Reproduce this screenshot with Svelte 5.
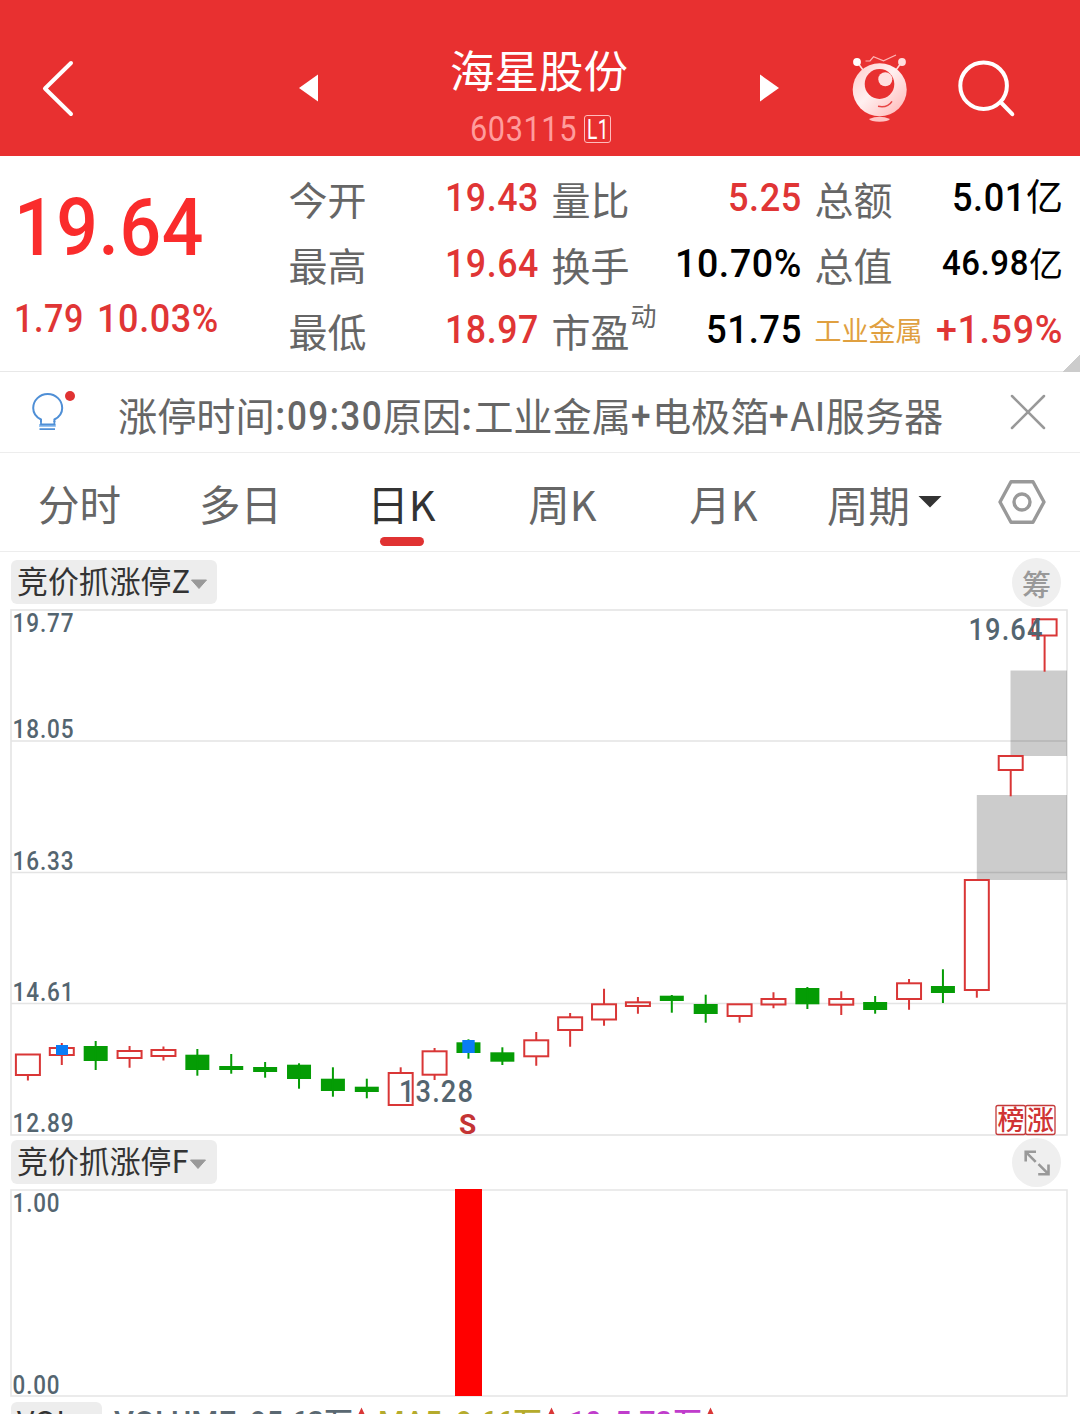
<script>
  const openRows = [
    { label: '今开', value: '19.43' },
    { label: '最高', value: '19.64' },
    { label: '最低', value: '18.97' }
  ];
  const ratioRows = [
    { label: '量比', value: '5.25', w: 74, tone: 'up' },
    { label: '换手', value: '10.70%', w: 127, tone: 'ink' },
    { label: '市盈', sup: '动', value: '51.75', w: 96, tone: 'ink' }
  ];
  const tabs = ['分时', '多日', '日K', '周K', '月K'];
  const notice = [
    ['cjk', '涨停时间', 157], ['num', ':', 12], ['num', '09:30', 96], ['cjk', '原因', 78],
    ['num', ':', 13], ['cjk', '工业金属', 157], ['num', '+', 21], ['cjk', '电极箔', 118],
    ['num', '+', 21], ['cjk', 'AI服务器', 153]
  ];
  // Candles: body top, body bottom, wick top, wick bottom (chart y), rising flag
  const candles = [
    [1053.5, 1076, 1055, 1080.5, 1], [1047, 1056, 1043, 1065, 1], [1046, 1061, 1041, 1070, 0],
    [1050, 1059, 1046, 1067.7, 1], [1049, 1057, 1046.5, 1060.5, 1], [1054.7, 1070, 1049, 1075.7, 0],
    [1066, 1070, 1054, 1073.7, 0], [1067, 1072, 1062, 1077.7, 0], [1064.7, 1079, 1063.3, 1088.7, 0],
    [1078.7, 1091, 1067.3, 1096.7, 0], [1086.7, 1092, 1078.7, 1098.3, 0], [1072, 1106, 1067.3, 1105, 1],
    [1050.3, 1075.7, 1048, 1080, 1], [1042.3, 1053, 1039.3, 1058.7, 0], [1052.3, 1061.7, 1047.3, 1065, 0],
    [1039.3, 1057.3, 1032, 1065.7, 1], [1016.3, 1031, 1013, 1046.7, 1], [1003.3, 1020.5, 988.7, 1025.7, 1],
    [1001.3, 1007, 997, 1013.7, 1], [995.7, 1001, 995, 1012.7, 0], [1004, 1014, 994.7, 1022.7, 0],
    [1003.3, 1017, 1004.3, 1022.7, 1], [998, 1005.5, 992.3, 1008.3, 1], [988, 1004.3, 987, 1009, 0],
    [998, 1005.7, 991.3, 1015, 1], [1002, 1010, 996, 1013.7, 0], [982.3, 1000, 979, 1009.7, 1],
    [986, 993, 969.3, 1003, 0], [879, 991, 880, 997.7, 1], [755, 771, 756, 796.3, 1],
    [618.3, 636.5, 619.3, 671.7, 1]
  ];
  const cx = (i) => 27.9 + 33.89 * i;
  const levels = [['19.77', 632.2], ['18.05', 738], ['16.33', 870], ['14.61', 1001], ['12.89', 1132]];
  // Volume legend: text, x, width, colour
  const legend = [
    ['VOLUME:', 114, 130, '#5a6872'], ['95.63', 250, 74, '#5a6872'], ['万', 324, 29, '#5a6872'],
    ['MA5:', 378, 72, '#b5ab2c'], ['9.66', 456, 57, '#b5ab2c'], ['万', 513, 29, '#b5ab2c'],
    ['10:', 569, 40, '#c03ccc'], ['5.73', 615, 57, '#c03ccc'], ['万', 673, 29, '#c03ccc']
  ];
</script>

{#snippet num(text, w, size, cls)}
  <svg class="num {cls}" width={w} height={size} aria-label={text}>
    <text x="0" y={size * 0.855} font-size={size} textLength={w} lengthAdjust="spacingAndGlyphs">{text}</text>
  </svg>
{/snippet}

{#snippet chip(name)}
  <button class="chip">
    <span>{name}</span>
    <svg width="18" height="11" viewBox="0 0 18 11"><path d="M1.500 1h15L9 9.500z" fill="#999" stroke="#999" stroke-linejoin="round" /></svg>
  </button>
{/snippet}

<main>
  <header>
    <svg class="back" width="34" height="60" viewBox="0 0 34 60"><path d="M30 5 4 30.500 30 56" /></svg>
    <svg class="prev" width="20" height="28" viewBox="0 0 20 28"><path d="M0 14 19 .5v27z" fill="#fff" /></svg>
    <div class="name">
      <h1>海星股份</h1>
      <div class="code">
        {@render num('603115', 107, 35, 'pale')}
        <span class="level">{@render num('L1', 22, 27, 'thin')}</span>
      </div>
    </div>
    <svg class="next" width="20" height="28" viewBox="0 0 20 28"><path d="M20 14 1 .5v27z" fill="#fff" /></svg>
    <svg class="mascot" width="56" height="70" viewBox="852 53 56 70">
      <defs>
        <linearGradient id="skin" x1="0" y1="0" x2="1" y2="1">
          <stop offset="0" stop-color="#ffc9c9" /><stop offset=".45" stop-color="#fff0f0" /><stop offset="1" stop-color="#ffb3b3" />
        </linearGradient>
      </defs>
      <path d="m858 63 5 7M901 63l-5 7" stroke="#ffd9d9" stroke-width="1.500" />
      <circle cx="857" cy="62" r="3.900" fill="#fff" /><circle cx="902" cy="62" r="3.900" fill="#ffdede" />
      <path d="M865.500 61h4.500l3.500-4.200 10 4L896 55" fill="none" stroke="#ffb5b5" stroke-width="1.200" />
      <ellipse cx="879.700" cy="89.700" rx="27" ry="26.500" fill="url(#skin)" />
      <ellipse cx="879.500" cy="84" rx="14.800" ry="15" fill="#e83030" />
      <circle cx="885.300" cy="79.300" r="7" fill="#ffe0e0" />
      <path d="M878 106.300q9.500 2 14-5" fill="none" stroke="#e84545" stroke-width="1.500" />
      <path d="M869 119q10.500-4.500 21 0-2 2.800-10.500 2.800T869 119z" fill="#ffc4c4" />
    </svg>
    <svg class="search" width="60" height="60" viewBox="956 58 60 60">
      <circle cx="983.600" cy="85.700" r="23.300" /><path d="m1001 102.500 11.300 11.700" />
    </svg>
  </header>

  <section class="quote">
    <div class="price">
      <div class="last">{@render num('19.64', 190, 80, 'hot')}</div>
      <div class="change">
        {@render num('1.79', 70, 38, 'up')}
        {@render num('10.03%', 122, 38, 'up')}
      </div>
    </div>
    <dl class="c1">
      {#each openRows as r}
        <div><dt>{r.label}</dt><dd>{@render num(r.value, 94, 39.5, 'up')}</dd></div>
      {/each}
    </dl>
    <dl class="c2">
      {#each ratioRows as r}
        <div><dt>{r.label}{#if r.sup}<small>{r.sup}</small>{/if}</dt><dd>{@render num(r.value, r.w, 39.5, r.tone)}</dd></div>
      {/each}
    </dl>
    <dl class="c3">
      <div><dt>总额</dt><dd>{@render num('5.01', 74, 39.5, 'ink')}<b>亿</b></dd></div>
      <div><dt>总值</dt><dd>{@render num('46.98', 87, 35.5, 'ink')}<b class="sm">亿</b></dd></div>
      <div><dt class="sector">工业金属</dt><dd>{@render num('+1.59%', 127, 39.5, 'up')}</dd></div>
    </dl>
    <i class="corner"></i>
  </section>

  <section class="notice">
    <svg class="bulb" width="48" height="44" viewBox="30 388 48 44">
      <path d="M41 422v-2.500c-5-2.500-7.800-6.600-7.800-11.500a14.500 14 0 0 1 29 0c0 4.900-2.800 9-7.800 11.500v2.500" fill="none" stroke="#4f8fd6" stroke-width="2" />
      <path d="M39 425.500h16.800" stroke="#9cc6f2" stroke-width="3" />
      <path d="M41 421v3.500h13.400V421M39.500 429.200h15.500" fill="none" stroke="#4f8fd6" stroke-width="1.800" />
      <circle cx="70" cy="396" r="5" fill="#e03232" />
    </svg>
    <p>
      {#each notice as [kind, text, w]}
        {#if kind === 'cjk'}<span>{text}</span>{:else}{@render num(text, w, 40, 'gray')}{/if}
      {/each}
    </p>
    <svg class="close" width="36" height="36" viewBox="0 0 36 36"><path d="M2 2l32 32M34 2 2 34" /></svg>
  </section>

  <nav>
    {#each tabs as t}
      <button class:active={t === '日K'}>{t}</button>
    {/each}
    <button class="period">周期<svg width="24" height="12" viewBox="0 0 24 12"><path d="M.5 0h23L12 11.500z" fill="#333" /></svg></button>
    <svg class="gear" width="48" height="44" viewBox="0 0 48 44">
      <path d="M13 1.800h22L46 22 35 42.200H13L2 22z" /><circle cx="24" cy="22" r="8" />
    </svg>
  </nav>

  <div class="bar first">{@render chip('竞价抓涨停Z')}<span class="round">筹</span></div>

  <svg class="chart" width="1080" height="529" viewBox="0 608 1080 529">
    <g stroke="#e4e4e4" stroke-width="1.300">
      <path d="M11 741h1056M11 872.500h1056M11 1003.500h1056" />
      <rect x="11" y="610" width="1056" height="525" fill="none" stroke-width="1.600" />
    </g>
    <g fill="#000" fill-opacity=".2">
      <rect x="1010.500" y="670.500" width="56.500" height="85.500" />
      <rect x="976.800" y="795" width="90.200" height="85" />
    </g>
    {#each candles as [top, bottom, high, low, rise], i}
      {#if rise}
        <g class="rise">
          <path d="M{cx(i)} {high}V{top + 1}M{cx(i)} {bottom - 1}V{low}" />
          <rect x={cx(i) - 12} y={top + 1} width="24" height={bottom - top - 2} />
        </g>
      {:else}
        <g class="fall">
          <rect x={cx(i) - 12} y={top} width="24" height={bottom - top} />
          <rect x={cx(i) - 1} y={high} width="2" height={low - high} />
        </g>
      {/if}
    {/each}
    <rect x="56" y="1045" width="12" height="10" fill="#0a7cf5" />
    <rect x="462.300" y="1040" width="12.400" height="13" fill="#0a7cf5" />
    <g class="axis" font-size="25">
      {#each levels as [label, y]}
        <text x="12.500" {y} textLength="62" lengthAdjust="spacingAndGlyphs">{label}</text>
      {/each}
    </g>
    <g class="axis" font-size="31">
      <text x="399" y="1102" textLength="75" lengthAdjust="spacingAndGlyphs">13.28</text>
      <text x="968.500" y="640" textLength="75" lengthAdjust="spacingAndGlyphs">19.64</text>
    </g>
    <text class="sell" x="467.500" y="1134">S</text>
    <g class="marks">
      <rect x="996" y="1105.500" width="29.500" height="29" rx="2" /><rect x="1025.500" y="1105.500" width="29.500" height="29" rx="2" />
      <text x="1011" y="1129.500">榜</text><text x="1040.500" y="1129.500">涨</text>
    </g>
  </svg>

  <div class="bar second">
    {@render chip('竞价抓涨停F')}
    <span class="round">
      <svg width="28" height="28" viewBox="1022.500 1148.500 28 28"><path d="M1025.200 1161v-9.700h10.300M1025.200 1151.300l10 10M1048 1164v9.700h-10.300M1048 1173.700l-10-10" fill="none" stroke="#999" stroke-width="2.600" /></svg>
    </span>
  </div>

  <svg class="chart" width="1080" height="210" viewBox="0 1188 1080 210">
    <rect x="11" y="1190" width="1056" height="206" fill="none" stroke="#e6e6e6" stroke-width="1.600" />
    <rect x="455" y="1189" width="27" height="207" fill="#f00" />
    <g class="axis" font-size="25">
      <text x="12.500" y="1212" textLength="48" lengthAdjust="spacingAndGlyphs">1.00</text>
      <text x="12.500" y="1394" textLength="48" lengthAdjust="spacingAndGlyphs">0.00</text>
    </g>
  </svg>

  <footer>
    <span class="vol">VOL</span>
    <svg class="legend" width="640" height="40" viewBox="110 1398 640 40" font-size="29">
      {#each legend as [text, x, w, fill]}
        <text {x} y={text === '万' ? 1433 : 1432} {fill} textLength={w} lengthAdjust="spacingAndGlyphs">{text}</text>
      {/each}
      <path d="m361.500 1407.500 6 13h-12zM551.500 1407.500l6 13h-12zM710.500 1407.500l6 13h-12z" fill="#d93636" />
    </svg>
  </footer>
</main>

<style>
  :global(body) { margin: 0; background: #fff; }
  main {
    width: 1080px; height: 1414px; overflow: hidden; display: flex; flex-direction: column;
    background: #fff; font-family: "Noto Sans CJK SC", sans-serif; color: #666;
  }
  main > * { flex: none; box-sizing: border-box; }
  svg { display: block; flex: none; }
  h1, p, dl, dd { margin: 0; font-weight: 400; }
  button { border: 0; padding: 0; background: none; color: inherit; font: inherit; }
  .num, .axis, .sell, .legend { font-family: Roboto, "Noto Sans CJK SC", sans-serif; }
  .num { overflow: visible; font-weight: 500; fill: currentColor; letter-spacing: .04em; }
  .up { color: #e03535; }
  .hot { color: #fa2c2c; }
  .ink { color: #000; }
  .gray { color: #666; }
  .pale { color: #ff9c9c; font-weight: 400; }
  .thin { font-weight: 400; }

  header { height: 156px; display: flex; align-items: flex-start; background: #e83030; color: #fff; }
  header > svg { fill: none; }
  .back { margin: 58px 0 0 41px; stroke: #fff; stroke-width: 4; stroke-linecap: round; stroke-linejoin: round; }
  .prev { margin: 74px 0 0 224px; }
  .name { width: 360px; margin: 0 40px; display: flex; flex-direction: column; align-items: center; }
  h1 { margin-top: 39px; font-size: 44.500px; line-height: 60px; }
  .code { margin-top: 12px; display: flex; gap: 7px; padding-left: 3px; }
  .level { box-sizing: border-box; width: 27px; height: 28px; margin-top: 4px; padding: 0 0 0 2px; border: 1.500px solid #ffbcbc; border-radius: 3px; }
  .next { margin: 74px 0 0; }
  .mascot { margin: 53px 0 0 73px; }
  .search { margin: 58px 0 0 48px; stroke: #fff; stroke-width: 4; stroke-linecap: round; }

  .quote { height: 216px; position: relative; display: flex; border-bottom: 1.500px solid #e8e8e8; padding-top: 11px; }
  .price { width: 289px; padding: 20px 0 0 14px; box-sizing: border-box; }
  .change { display: flex; gap: 13px; margin-top: 32px; }
  dl > div { height: 66px; display: flex; justify-content: space-between; align-items: center; }
  dt { position: relative; font-size: 39px; line-height: 66px; padding-bottom: 4px; margin-left: -.5px; }
  dd { display: flex; align-items: center; height: 66px; padding-bottom: 7px; box-sizing: border-box; }
  dd b { font-weight: 400; font-size: 37px; line-height: 40px; color: #000; padding-bottom: 3px; }
  dd b.sm { font-size: 34px; padding-bottom: 0; }
  dt small { position: absolute; left: 79px; top: -15px; font-size: 26px; }
  .sector { font-size: 27px; color: #e0a040; }
  .c1 { width: 250px; }
  .c2 { width: 250px; margin-left: 13px; }
  .c3 { width: 248px; margin-left: 13px; }
  .corner { position: absolute; right: 0; bottom: -1px; width: 17px; height: 17px; background: linear-gradient(135deg, transparent 50%, #ccc 50%); }

  .notice { height: 81px; display: flex; align-items: flex-start; border-bottom: 1.500px solid #ededed; }
  .bulb { margin: 16px 0 0 30px; }
  .notice p { width: 894px; padding-left: 40px; box-sizing: border-box; display: flex; align-items: center; height: 88px; font-size: 39.200px; line-height: 50px; white-space: nowrap; }
  .notice p span { padding-bottom: 4px; }
  .close { margin: 22px 0 0 38px; stroke: #999; stroke-width: 2.500; fill: none; stroke-linecap: round; }

  nav { height: 99px; display: flex; border-bottom: 1.500px solid #ededed; font-size: 41.500px; }
  nav button { position: relative; width: 161px; height: 98px; line-height: 98px; padding: 1px 2px 0 0; box-sizing: border-box; }
  nav .active { color: #333; }
  .active::after { content: ''; position: absolute; left: 58px; bottom: 5px; width: 44px; height: 9px; border-radius: 5px; background: #e03232; }
  nav .period { width: 162px; padding: 3px 0 0 22px; display: flex; align-items: center; gap: 8px; }
  .period svg { margin-top: -3px; }
  .gear { margin: 27px 0 0 31px; fill: none; stroke: #999; stroke-width: 3.400; stroke-linejoin: round; }

  .bar { display: flex; justify-content: space-between; padding: 0 19px 0 11px; }
  .first { height: 56px; padding-top: 6px; }
  .second { height: 51px; padding-top: 1px; }
  .chip { box-sizing: border-box; height: 44px; width: 206px; margin-top: 2px; padding: 0 0 5px 6px; background: #ededed; border-radius: 6px; display: flex; align-items: center; gap: 0; color: #333; font-size: 30.900px; line-height: 41px; }
  .chip svg { margin-top: 9px; }
  .round { width: 49px; height: 49px; border-radius: 50%; background: #efefef; color: #999; display: flex; align-items: center; justify-content: center; font-size: 29px; font-weight: 500; }

  .rise { fill: none; stroke: #d93636; stroke-width: 2; }
  .fall { fill: #059c05; }
  .axis { fill: #546570; font-weight: 500; letter-spacing: .04em; }
  .sell { font-size: 28px; font-weight: 700; fill: #c43434; text-anchor: middle; }
  .marks rect { fill: none; stroke: #c43a3a; stroke-width: 1.300; }
  .marks text { font-size: 27px; font-weight: 500; fill: #d03434; text-anchor: middle; }

  footer { display: flex; padding: 4px 0 0 11px; height: 17px; overflow: hidden; }
  .vol { box-sizing: border-box; width: 91px; height: 44px; padding-left: 6px; background: #ededed; border-radius: 6px; color: #333; font-size: 30px; line-height: 37px; }
  .legend { margin: -4px 0 0 8px; font-weight: 500; }
</style>
